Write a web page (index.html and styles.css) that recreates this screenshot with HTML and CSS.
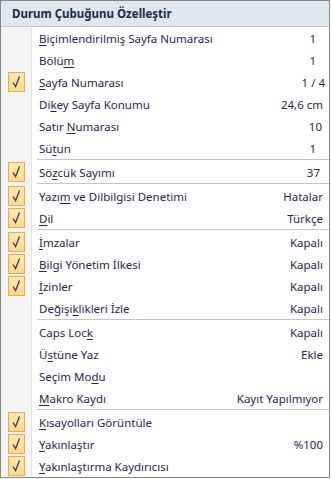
FILE: index.html
```html
<!DOCTYPE html>
<html lang="tr">
<head>
<meta charset="utf-8">
<title>Durum Çubuğunu Özelleştir</title>
<link rel="stylesheet" href="styles.css">
</head>
<body>
<div class="menu">
  <div class="header">Durum Çubuğunu Özelleştir</div>
  <div class="list">
    <div class="row"><span class="gutter"></span><span class="label"><u>B</u>içimlendirilmiş Sayfa Numarası</span><span class="value pad8">1</span></div>
    <div class="row"><span class="gutter"></span><span class="label">Bölü<u>m</u></span><span class="value pad8">1</span></div>
    <div class="row"><span class="gutter"><span class="check"><svg viewBox="0 0 17 20" width="17" height="20"><path d="M5 10.5 L7.6 14.5 L11.5 4.5" fill="none" stroke="#2d3a6a" stroke-width="1.3"/></svg></span></span><span class="label"><u>S</u>ayfa Numarası</span><span class="value pad1">1 / 4</span></div>
    <div class="row"><span class="gutter"></span><span class="label">Di<u>k</u>ey Sayfa Konumu</span><span class="value">24,6 cm</span></div>
    <div class="row"><span class="gutter"></span><span class="label">Satır <u>N</u>umarası</span><span class="value pad2">10</span></div>
    <div class="row"><span class="gutter"></span><span class="label">Sü<u>t</u>un</span><span class="value pad8">1</span></div>
    <div class="sep"></div>
    <div class="row"><span class="gutter"><span class="check"><svg viewBox="0 0 17 20" width="17" height="20"><path d="M5 10.5 L7.6 14.5 L11.5 4.5" fill="none" stroke="#2d3a6a" stroke-width="1.3"/></svg></span></span><span class="label">Sö<u>z</u>cük Sayımı</span><span class="value pad4">37</span></div>
    <div class="sep"></div>
    <div class="row"><span class="gutter"><span class="check"><svg viewBox="0 0 17 20" width="17" height="20"><path d="M5 10.5 L7.6 14.5 L11.5 4.5" fill="none" stroke="#2d3a6a" stroke-width="1.3"/></svg></span></span><span class="label">Yazı<u>m</u> ve Dilbilgisi Denetimi</span><span class="value">Hatalar</span></div>
    <div class="row"><span class="gutter"><span class="check"><svg viewBox="0 0 17 20" width="17" height="20"><path d="M5 10.5 L7.6 14.5 L11.5 4.5" fill="none" stroke="#2d3a6a" stroke-width="1.3"/></svg></span></span><span class="label"><u>D</u>il</span><span class="value">Türkçe</span></div>
    <div class="sep"></div>
    <div class="row"><span class="gutter"><span class="check"><svg viewBox="0 0 17 20" width="17" height="20"><path d="M5 10.5 L7.6 14.5 L11.5 4.5" fill="none" stroke="#2d3a6a" stroke-width="1.3"/></svg></span></span><span class="label"><u>İ</u>mzalar</span><span class="value">Kapalı</span></div>
    <div class="row"><span class="gutter"><span class="check"><svg viewBox="0 0 17 20" width="17" height="20"><path d="M5 10.5 L7.6 14.5 L11.5 4.5" fill="none" stroke="#2d3a6a" stroke-width="1.3"/></svg></span></span><span class="label"><u>B</u>ilgi Yönetim İlkesi</span><span class="value">Kapalı</span></div>
    <div class="row"><span class="gutter"><span class="check"><svg viewBox="0 0 17 20" width="17" height="20"><path d="M5 10.5 L7.6 14.5 L11.5 4.5" fill="none" stroke="#2d3a6a" stroke-width="1.3"/></svg></span></span><span class="label"><u>İ</u>zinler</span><span class="value">Kapalı</span></div>
    <div class="row"><span class="gutter"></span><span class="label">Değişi<u>k</u>likleri İzle</span><span class="value">Kapalı</span></div>
    <div class="sep"></div>
    <div class="row"><span class="gutter"></span><span class="label">Caps Loc<u>k</u></span><span class="value">Kapalı</span></div>
    <div class="row"><span class="gutter"></span><span class="label">Ü<u>s</u>tüne Yaz</span><span class="value">Ekle</span></div>
    <div class="row"><span class="gutter"></span><span class="label">Seçim Mo<u>d</u>u</span><span class="value"></span></div>
    <div class="row"><span class="gutter"></span><span class="label"><u>M</u>akro Kaydı</span><span class="value">Kayıt Yapılmıyor</span></div>
    <div class="sep"></div>
    <div class="row"><span class="gutter"><span class="check"><svg viewBox="0 0 17 20" width="17" height="20"><path d="M5 10.5 L7.6 14.5 L11.5 4.5" fill="none" stroke="#2d3a6a" stroke-width="1.3"/></svg></span></span><span class="label"><u>K</u>ısayolları Görüntüle</span><span class="value"></span></div>
    <div class="row"><span class="gutter"><span class="check"><svg viewBox="0 0 17 20" width="17" height="20"><path d="M5 10.5 L7.6 14.5 L11.5 4.5" fill="none" stroke="#2d3a6a" stroke-width="1.3"/></svg></span></span><span class="label"><u>Y</u>akınlaştır</span><span class="value">%100</span></div>
    <div class="row"><span class="gutter"><span class="check"><svg viewBox="0 0 17 20" width="17" height="20"><path d="M5 10.5 L7.6 14.5 L11.5 4.5" fill="none" stroke="#2d3a6a" stroke-width="1.3"/></svg></span></span><span class="label"><u>Y</u>akınlaştırma Kaydırıcısı</span><span class="value"></span></div>
  </div>
</div>
</body>
</html>
```
FILE: styles.css
```css
* { box-sizing: border-box; }
html, body {
  margin: 0;
  padding: 0;
  background: #ffffff;
}
body {
  font-family: "Noto Sans", "Open Sans", sans-serif;
  font-size: 11.5px;
  color: #25254f;
}
.menu {
  width: 330px;
  border: 1px solid #868686;
  background: #ffffff;
}
.header {
  height: 26px;
  padding-left: 11px;
  display: flex;
  align-items: center;
  background: #dde7ee;
  border-bottom: 1px solid #c5c5c5;
  font-weight: bold;
  color: #1b2a4a;
}
.list {
  background: linear-gradient(to right, #f4f4f4 0, #f4f4f4 30px, #e2e3e3 30px, #e2e3e3 31px, #ffffff 31px);
}
.row {
  height: 22px;
  display: flex;
  align-items: center;
}
.gutter {
  width: 38px;
  height: 22px;
  flex: none;
  display: flex;
  align-items: center;
  padding-left: 7px;
}
.check {
  width: 17px;
  height: 20px;
  display: block;
  background: linear-gradient(#fde9ae, #fbd98a);
  border: 1px solid #e6ac52;
}
.check svg {
  display: block;
  margin: -1px;
}
.label {
  flex: 1;
  white-space: nowrap;
}
.label u {
  text-decoration-thickness: 1px;
  text-underline-offset: 2px;
}
.value {
  padding-right: 6px;
  white-space: nowrap;
}
.value.pad1 { padding-right: 4px; }
.value.pad2 { padding-right: 7px; }
.value.pad4 { padding-right: 9px; }
.value.pad8 { padding-right: 13px; }
.sep {
  height: 2px;
  margin-left: 36px;
  border-top: 1px solid #c5c5c5;
}
```
